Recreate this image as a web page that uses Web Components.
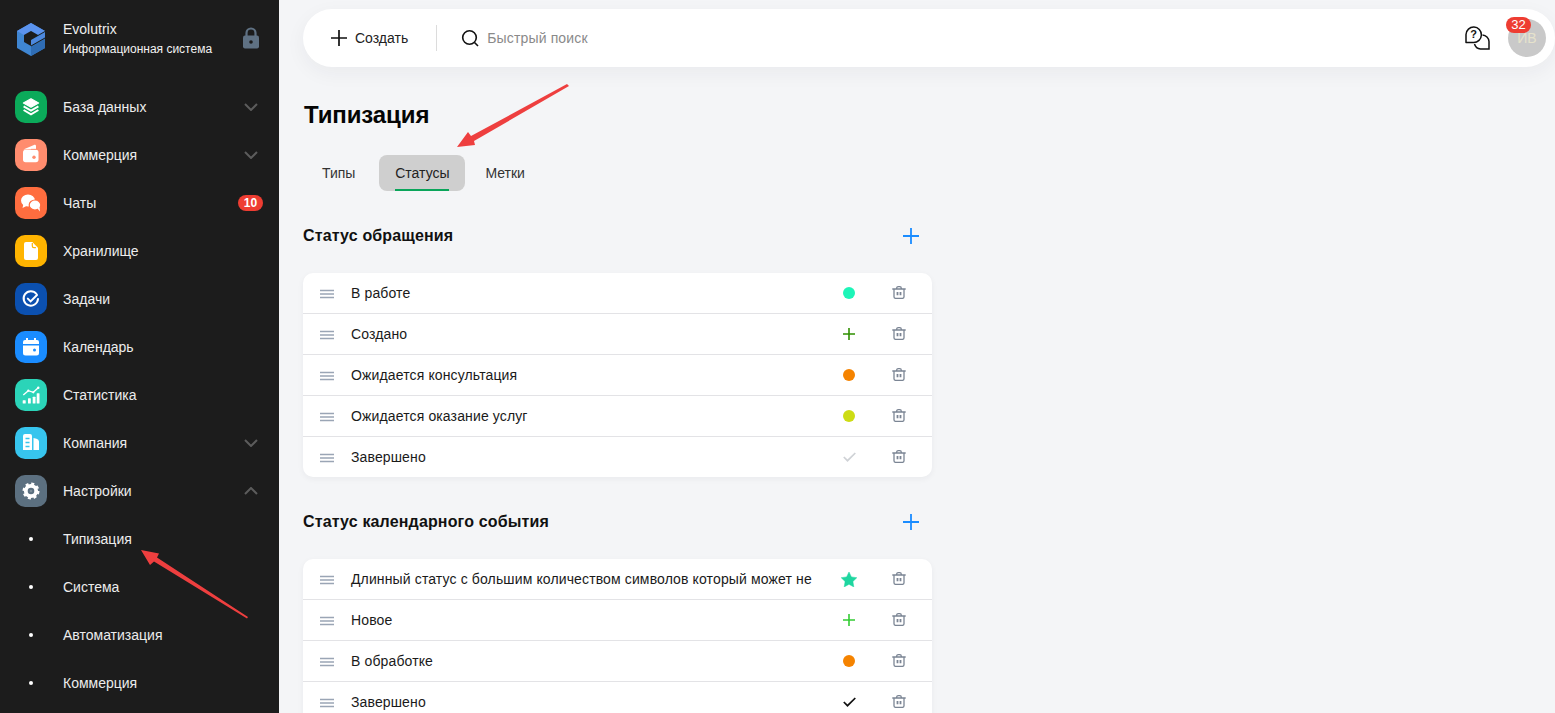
<!doctype html>
<html lang="ru"><head><meta charset="utf-8"><title>Типизация</title>
<style>
html,body{margin:0;height:100%;overflow:hidden;background:#f4f5f7;font-family:"Liberation Sans",Arial,sans-serif;font-size:14px;color:#1a1a1a}
</style></head><body>
<app-shell>
  <side-bar slot="side">
    <nav-item label="База данных" color="#0baa5a" chevron="down"><svg viewBox="0 0 32 32" fill="none" stroke="#fff"><path d="M16 7.800 23.600 12 16 16.200 8.400 12z" fill="#fff" stroke-width="1.200" stroke-linejoin="round"/><path d="M8.600 15.400 16 19.600l7.400-4.200M8.600 19 16 23.400l7.400-4.400" stroke-width="2"/></svg></nav-item>
    <nav-item label="Коммерция" color="#ff8c6e" chevron="down"><svg viewBox="0 0 32 32"><path d="M8.300 10.500 19 5.900c1-.4 2 .2 2 1.200v2.900l-1.500 0z" fill="#fff"/><rect x="8" y="10.800" width="15.500" height="12.400" rx="2.600" fill="#fff"/><path d="M16 10.300h5.300" stroke="#ff8c6e" stroke-width=".7"/><circle cx="19" cy="18.200" r="1.700" fill="#ff8c6e"/></svg></nav-item>
    <nav-item label="Чаты" color="#ff6d3f" badge="10"><svg viewBox="0 0 32 32"><ellipse cx="13" cy="13.500" rx="7" ry="6" fill="#fff"/><path d="M8.500 16.500 7.500 21l5-2.500z" fill="#fff"/><ellipse cx="20" cy="18" rx="5.800" ry="5" fill="#fff" stroke="#ff6d3f" stroke-width="1.200"/><path d="M22.500 21.500 25 24.500l-.5-4.500z" fill="#fff"/></svg></nav-item>
    <nav-item label="Хранилище" color="#ffb400"><svg viewBox="0 0 32 32"><path d="M11 7h6.300L23 12.700V23a2 2 0 0 1-2 2H11a2 2 0 0 1-2-2V9a2 2 0 0 1 2-2z" fill="#fff"/><path d="M17.300 8v3a1.600 1.600 0 0 0 1.600 1.600h2" fill="none" stroke="#ffb400" stroke-width="1.200"/></svg></nav-item>
    <nav-item label="Задачи" color="#0b50b0"><svg viewBox="0 0 32 32" fill="none" stroke="#fff" stroke-width="2" stroke-linecap="round"><path d="M21.500 11A7.200 7.200 0 1 0 23 16"/><path d="m12.800 15.600 2.800 2.800 6.400-6.400"/></svg></nav-item>
    <nav-item label="Календарь" color="#1a8cff"><svg viewBox="0 0 32 32"><path d="M11 7h2v2h6V7h2v2h1a2 2 0 0 1 2 2v2H8v-2a2 2 0 0 1 2-2h1zM8 14.500h16V22a2.500 2.500 0 0 1-2.500 2.500h-11A2.500 2.500 0 0 1 8 22z" fill="#fff"/><circle cx="19.500" cy="19" r="1.500" fill="#1a8cff"/></svg></nav-item>
    <nav-item label="Статистика" color="#2bd4b8"><svg viewBox="0 0 32 32" fill="#fff"><rect x="7.700" y="21.200" width="3" height="3.200" rx=".5"/><rect x="13" y="19.300" width="2.800" height="5.100" rx=".5"/><rect x="17.700" y="17.700" width="2.800" height="6.700" rx=".5"/><rect x="21.700" y="14.300" width="2.800" height="10.100" rx=".5"/><path d="m8.300 16 5-4.300 5 1.600 5-4.600" fill="none" stroke="#fff" stroke-width="1.400"/><circle cx="23.300" cy="8.700" r="1.200"/><circle cx="13.300" cy="11.700" r="1.100"/><circle cx="18.300" cy="13.300" r="1.100"/></svg></nav-item>
    <nav-item label="Компания" color="#37c5ee" chevron="down"><svg viewBox="0 0 32 32"><path d="M10 7h5a2 2 0 0 1 2 2v14H8V9a2 2 0 0 1 2-2zM18.500 11l3 .8a3 3 0 0 1 2.500 2.800V23h-5.500z" fill="#fff"/><path d="M10.500 11.500h4M10.500 15.500h4M10.500 19.500h4" stroke="#37c5ee" stroke-width="1.600"/></svg></nav-item>
    <nav-item label="Настройки" color="#5c7080" chevron="up"><svg viewBox="0 0 32 32" fill="none" stroke="#fff"><circle cx="16" cy="16" r="5.200" stroke-width="3.800"/><circle cx="16" cy="16" r="7.300" stroke-width="2.400" stroke-dasharray="3 2.730"/><circle cx="16" cy="16" r="1.300" fill="#7d8d99" stroke="none"/></svg></nav-item>
    <nav-item label="Типизация" sub></nav-item>
    <nav-item label="Система" sub></nav-item>
    <nav-item label="Автоматизация" sub></nav-item>
    <nav-item label="Коммерция" sub></nav-item>
  </side-bar>
  <top-bar></top-bar>
  <page-head heading="Типизация"></page-head>
  <page-tabs></page-tabs>
  <status-section heading="Статус обращения">
    <status-row label="В работе" kind="dot" tone="#1df5b8"></status-row>
    <status-row label="Создано" kind="plus" tone="#2f9000"></status-row>
    <status-row label="Ожидается консультация" kind="dot" tone="#f58300"></status-row>
    <status-row label="Ожидается оказание услуг" kind="dot" tone="#cddc14"></status-row>
    <status-row label="Завершено" kind="check" tone="#cfd2d6"></status-row>
  </status-section>
  <status-section heading="Статус календарного события">
    <status-row label="Длинный статус с большим количеством символов который может не" kind="star" tone="#1fd6a0"></status-row>
    <status-row label="Новое" kind="plus" tone="#33cc33"></status-row>
    <status-row label="В обработке" kind="dot" tone="#f58300"></status-row>
    <status-row label="Завершено" kind="check" tone="#111"></status-row>
  </status-section>
  <note-arrows slot="over"></note-arrows>
</app-shell>
<script>
const def=(name,html,extra={})=>{
  const t=document.createElement('template');t.innerHTML=html;
  customElements.define(name,class extends HTMLElement{
    connectedCallback(){
      if(this.shadowRoot)return;
      const r=this.attachShadow({mode:'open'});r.appendChild(t.content.cloneNode(true));
      if(extra.init)extra.init(this,r);
    }
  });
};
def('app-shell',`<style>
:host{display:flex;height:100vh;width:100%;position:relative;overflow:hidden}
aside{flex:0 0 279px;height:100%}
main{flex:1;min-width:0;padding:9px 0 0 24px;box-sizing:border-box;overflow:hidden}
</style><aside><slot name="side"></slot></aside><main><slot></slot></main><slot name="over"></slot>`);
def('side-bar',`<style>
:host{display:block;height:100%;background:#1c1c1c;color:#eee;overflow:hidden;box-sizing:border-box}
.brand{height:83px;box-sizing:border-box;padding:23px 20px 0 17px;display:flex;align-items:flex-start}
.logo{width:28px;height:33px;flex:none}
.names{margin-left:18px;flex:1}
.n1{font-size:14px;line-height:14px;margin-top:-1px;height:20px}
.n2{font-size:12px;line-height:14px;color:#f2f2f2}
.lock{width:16px;height:22px;flex:none;margin-top:4px}
.scroll{display:flex;flex-direction:column}
</style>
<div class="brand">
<svg class="logo" viewBox="0 0 28 33"><path d="M14 0 28 8v17l-14 8-14-8V8z" fill="#3f86d2"/><path d="M14 0 28 8 21 12 14 8 7 12 0 8z" fill="#5b93ee"/><path d="M14 33V23l7-4 7-4v10z" fill="#2f6db5"/><path d="M7 12l7-4 7 4 7-4v1l-14 8v6l-7-4z" fill="#1c1c1c"/><path d="M14 17.500 28 9.500V14l-14 8z" fill="#4d88de"/><path d="M14 23l14-8" stroke="#1c1c1c" stroke-width="1"/></svg>
<div class="names"><div class="n1">Evolutrix</div><div class="n2">Информационная система</div></div>
<svg class="lock" viewBox="0 0 16 22"><path d="M3.500 10V6a4.500 4.500 0 0 1 9 0v4" fill="none" stroke="#5f7183" stroke-width="2.200"/><rect x="0" y="8.500" width="16" height="13" rx="2" fill="#5f7183"/><circle cx="8" cy="15" r="1.800" fill="#1c1c1c"/></svg>
</div><div class="scroll"><slot></slot></div>`);
def('nav-item',`<style>
:host{display:block;height:48px}
.row{height:48px;display:flex;align-items:center;padding-left:15px;padding-right:16px}
.ic{width:32px;height:32px;border-radius:10px;flex:none;margin-right:16px;display:flex;align-items:center;justify-content:center}
.ic ::slotted(svg){width:32px;height:32px;display:block}
.sub{width:32px;flex:none;margin-right:16px;display:flex;justify-content:center}
.sub i{width:4px;height:4px;border-radius:50%;background:#fff;display:block}
.lb{flex:1;color:#ececec;font-size:14px;white-space:nowrap}
.chev{width:14px;height:8px;margin-right:5px;flex:none}
.bdg{background:#ee3d32;color:#fff;font-size:12px;font-weight:700;border-radius:8px;height:16px;line-height:16px;width:25px;text-align:center;flex:none}
</style><div class="row"></div>`,{init(h,r){
  const row=r.querySelector('.row');const c=h.getAttribute('color');
  row.innerHTML=(h.hasAttribute('sub')?'<span class="sub"><i></i></span>':`<span class="ic" style="background:${c}"><slot></slot></span>`)
  +`<span class="lb">${h.getAttribute('label')}</span>`
  +(h.getAttribute('chevron')?`<svg class="chev" viewBox="0 0 14 8" fill="none" stroke="#5c5c5c" stroke-width="2"><path d="${h.getAttribute('chevron')=='down'?'M1 1l6 6 6-6':'M1 7l6-6 6 6'}"/></svg>`:'')
  +(h.getAttribute('badge')?`<span class="bdg">${h.getAttribute('badge')}</span>`:'');
}});
def('top-bar',`<style>
:host{display:flex;align-items:center;height:58px;background:#fff;border-radius:29px;box-shadow:0 6px 20px rgba(30,40,60,.05);padding-left:28px;padding-right:9px;color:#222}
.plus{width:16px;height:16px;margin-right:8px}
.div{width:1px;height:26px;background:#dcdcdc;margin:0 24px 0 28px}
.search{width:18px;height:18px;margin-right:8px}
.ph{color:#8a8a8a;flex:1;letter-spacing:.15px}
.help{width:25px;height:24px;margin-right:18px;margin-top:-1px}
.av{width:38px;height:38px;border-radius:50%;background:#c9c9c9;color:#e6e2cc;display:flex;align-items:center;justify-content:center;position:relative;font-size:14px}
.cnt{position:absolute;left:-2px;top:-2px;width:25px;height:16px;border-radius:8px;background:#ee3d32;color:#fff;font-size:13px;line-height:16px;text-align:center}
</style>
<svg class="plus" viewBox="0 0 16 16" stroke="#111" stroke-width="1.700"><path d="M8 0v16M0 8h16"/></svg><span>Создать</span><span class="div"></span>
<svg class="search" viewBox="0 0 18 18" fill="none" stroke="#111" stroke-width="1.600"><circle cx="8.500" cy="8.500" r="6.800"/><path d="m13.500 13.500 3.500 3.500"/></svg><span class="ph">Быстрый поиск</span>
<svg class="help" viewBox="0 0 25 24" fill="none" stroke="#111" stroke-width="1.500"><path d="M1 16.500H8.500A7.700 7.700 0 1 0 1 8.500Z" stroke-linejoin="round"/><path d="M17.500 9A7 7 0 0 1 24 15.500V23H15.500A7 7 0 0 1 9.500 18"/><text x="8.500" y="12.300" font-family="Liberation Sans" font-size="11" font-weight="700" fill="#111" stroke="none" text-anchor="middle">?</text></svg>
<div class="av">ИВ<span class="cnt">32</span></div>`);
def('page-head',`<style>
:host{display:block;margin-top:34px;height:28px;padding-left:1px}
h1{margin:0;font-size:24px;line-height:28px;font-weight:700;color:#050505;letter-spacing:-.1px}
</style><h1></h1>`,{init(h,r){r.querySelector('h1').textContent=h.getAttribute('heading')}});
def('page-tabs',`<style>
:host{display:flex;gap:4px;margin-top:26px;height:36px;padding-left:3px;color:#333}
span{display:block;height:36px;line-height:36px;padding:0 16px;border-radius:8px;position:relative;box-sizing:border-box}
.first{padding-right:20px}
.on{background:#cfcfcf;color:#222;width:86px;padding:0;text-align:center}
.on::after{content:"";position:absolute;left:16px;right:16px;bottom:0;height:2px;background:#0aa55a}
</style><span class="first">Типы</span><span class="on">Статусы</span><span>Метки</span>`);
def('status-section',`<style>
:host{display:block;width:629px;margin-top:24px}
header{height:40px;display:flex;align-items:center;justify-content:space-between;padding-right:13px;margin-bottom:18px}
h2{margin:2px 0 0;font-size:16px;line-height:20px;font-weight:700;color:#111;letter-spacing:.15px}
svg{width:16px;height:16px;margin-top:1px}
.card{background:#fff;border-radius:10px;box-shadow:0 2px 6px rgba(30,40,60,.05);overflow:hidden}
</style><header><h2></h2><svg viewBox="0 0 16 16" stroke="#1a8cff" stroke-width="1.800"><path d="M8 0v16M0 8h16"/></svg></header><div class="card"><slot></slot></div>`,{init(h,r){r.querySelector('h2').textContent=h.getAttribute('heading')}});
const mark={
 dot:c=>`<svg width="12" height="12" viewBox="0 0 12 12"><circle cx="6" cy="6" r="6" fill="${c}"/></svg>`,
 plus:c=>`<svg width="12" height="12" viewBox="0 0 12 12" stroke="${c}" stroke-width="1.600"><path d="M6 0v12M0 6h12"/></svg>`,
 check:c=>`<svg width="13" height="10" viewBox="0 0 13 10" fill="none" stroke="${c}" stroke-width="1.700"><path d="m.8 5 3.700 3.700L12.300 1"/></svg>`,
 star:c=>`<svg width="16" height="15" viewBox="0 0 16 15"><path d="M8 0l2.400 4.900 5.400.8-3.900 3.800.9 5.400L8 12.300l-4.800 2.600.9-5.400L.2 5.700l5.400-.8z" fill="${c}" stroke="${c}" stroke-width=".5" stroke-linejoin="round"/></svg>`
};
def('status-row',`<style>
:host{display:grid;grid-template-columns:48px 484px 28px 25px 22px 22px;align-items:center;height:41px;box-sizing:border-box;border-bottom:1px solid #e3e3e6;color:#1a1a1a}
:host(:last-child){height:40px;border-bottom:0}
.h{width:14px;height:10px;margin-left:17px;margin-top:2px;display:block}
.t{line-height:20px;white-space:nowrap;letter-spacing:.13px}
.m,.d{display:flex;justify-content:center;align-items:center}
.m{grid-column:3}.d{grid-column:5}
.d svg{margin-top:-1px}
</style>
<svg class="h" viewBox="0 0 14 10" stroke="#9aa5b5" stroke-width="1.500"><path d="M0 1.400h14M0 5h14M0 8.600h14"/></svg>
<div class="t"></div><div class="m"></div>
<div class="d"><svg width="14" height="13" viewBox="0 0 14 13" fill="none" stroke="#7b8594" stroke-width="1.300"><path d="M.3 3h13.400M4.700 3V2.200C4.700 1.200 5.400.7 6.200.7h1.600c.8 0 1.500.5 1.500 1.500V3M2 3v7.700c0 1 .7 1.700 1.700 1.700h6.600c1 0 1.700-.7 1.700-1.700V3"/><path d="M5.500 6v3.200M8.500 6v3.200" stroke-width="1.800"/></svg></div>`,{init(h,r){
  r.querySelector('.t').textContent=h.getAttribute('label');
  r.querySelector('.m').innerHTML=mark[h.getAttribute('kind')](h.getAttribute('tone'));
}});
def('note-arrows',`<style>
:host{position:absolute;inset:0;pointer-events:none;display:block}
svg{position:absolute;left:0;top:0;width:100%;height:100%}
</style><svg viewBox="0 0 1555 713"><g fill="#ee3f3f"><path d="M567 84 569 86 474 141 475 145 457 147 468 132 471 136z"/><path d="M248 617 247 618.500 154 561.500 150 565 141 550 159 553.500 157 557.500z"/></g></svg>`);
</script>
</body></html>
